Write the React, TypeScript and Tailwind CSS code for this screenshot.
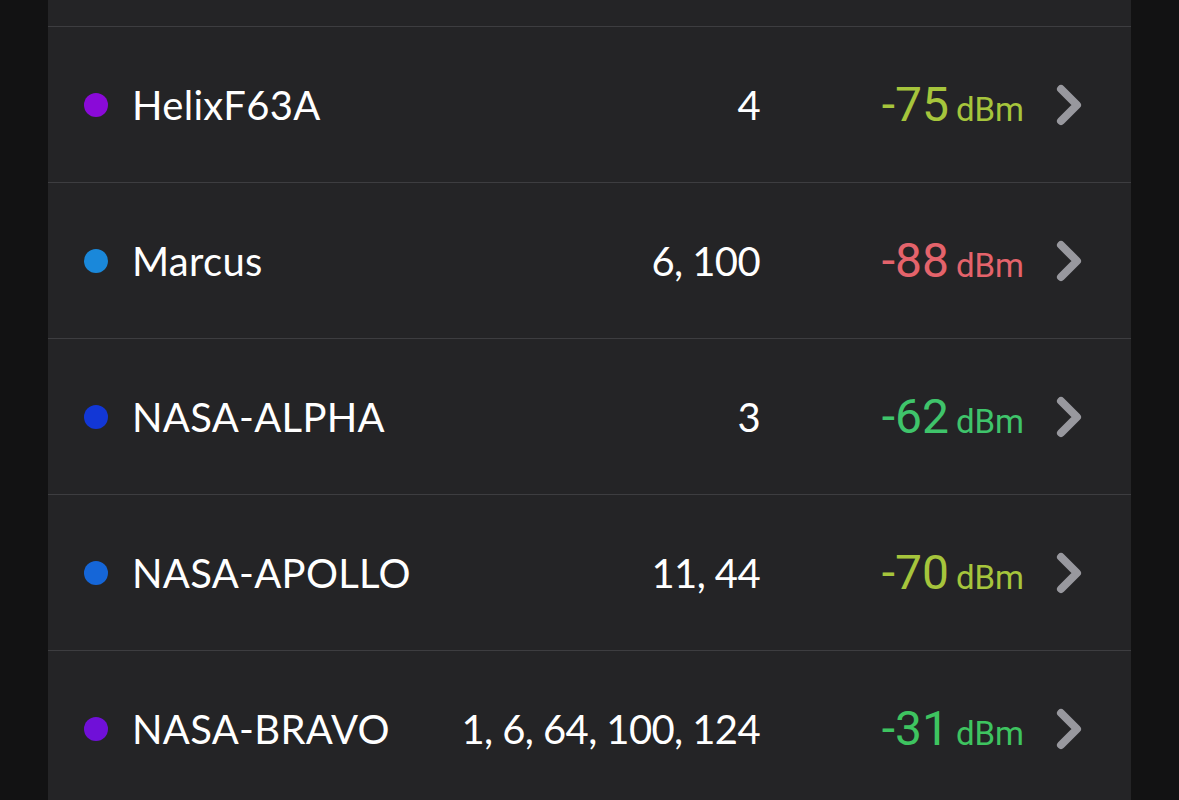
import React from 'react';

interface Network {
  name: string;
  dot: string;
  channels: string;
  rssi: number;
  color: string;
}

const networks: Network[] = [
  { name: 'HelixF63A', dot: 'bg-[#8a0ad8]', channels: '4', rssi: -75, color: 'text-[#a6c53c]' },
  { name: 'Marcus', dot: 'bg-[#1a88da]', channels: '6, 100', rssi: -88, color: 'text-[#e4636b]' },
  { name: 'NASA-ALPHA', dot: 'bg-[#1237d6]', channels: '3', rssi: -62, color: 'text-[#3fc46b]' },
  { name: 'NASA-APOLLO', dot: 'bg-[#1566d8]', channels: '11, 44', rssi: -70, color: 'text-[#a6c53c]' },
  { name: 'NASA-BRAVO', dot: 'bg-[#7010d8]', channels: '1, 6, 64, 100, 124', rssi: -31, color: 'text-[#3ec460]' },
];

// disclosure chevron, thick with round ends like the iOS one
const Chevron = () => (
  <svg width="26" height="42" viewBox="0 0 26 42" fill="none" className="shrink-0">
    <polyline
      points="5,5 21,21 5,37"
      stroke="#98989e"
      strokeWidth="8"
      strokeLinecap="round"
      strokeLinejoin="round"
    />
  </svg>
);

const Row: React.FC<{ n: Network }> = ({ n }) => (
  <div className="h-[156px] flex items-center pl-[36px] pr-[49px] border-b border-[#3d3d40]">
    <span className={`w-[24px] h-[24px] rounded-full shrink-0 ${n.dot}`} />
    <span className="ml-[24px] flex-1 text-white text-[40px] font-['Lato',sans-serif] tracking-[0.3px] whitespace-nowrap">
      {n.name}
    </span>
    <span className="text-white text-[40px] font-['Lato',sans-serif] tracking-[-0.6px] whitespace-nowrap">
      {n.channels}
    </span>
    <span className={`w-[264px] flex items-baseline justify-end font-['Roboto',sans-serif] ${n.color}`}>
      <span className="text-[48px]">{n.rssi}</span>
      <span className="text-[33px] ml-[7px]">dBm</span>
    </span>
    <span className="ml-[32px] flex items-center">
      <Chevron />
    </span>
  </div>
);

export default function App() {
  return (
    <div className="w-[1179px] h-[800px] overflow-hidden bg-[#121213] px-[48px]">
      <div className="bg-[#242426] h-full">
        <div className="h-[27px] border-b border-[#3d3d40]" />
        {networks.map((n) => (
          <Row key={n.name} n={n} />
        ))}
      </div>
    </div>
  );
}
